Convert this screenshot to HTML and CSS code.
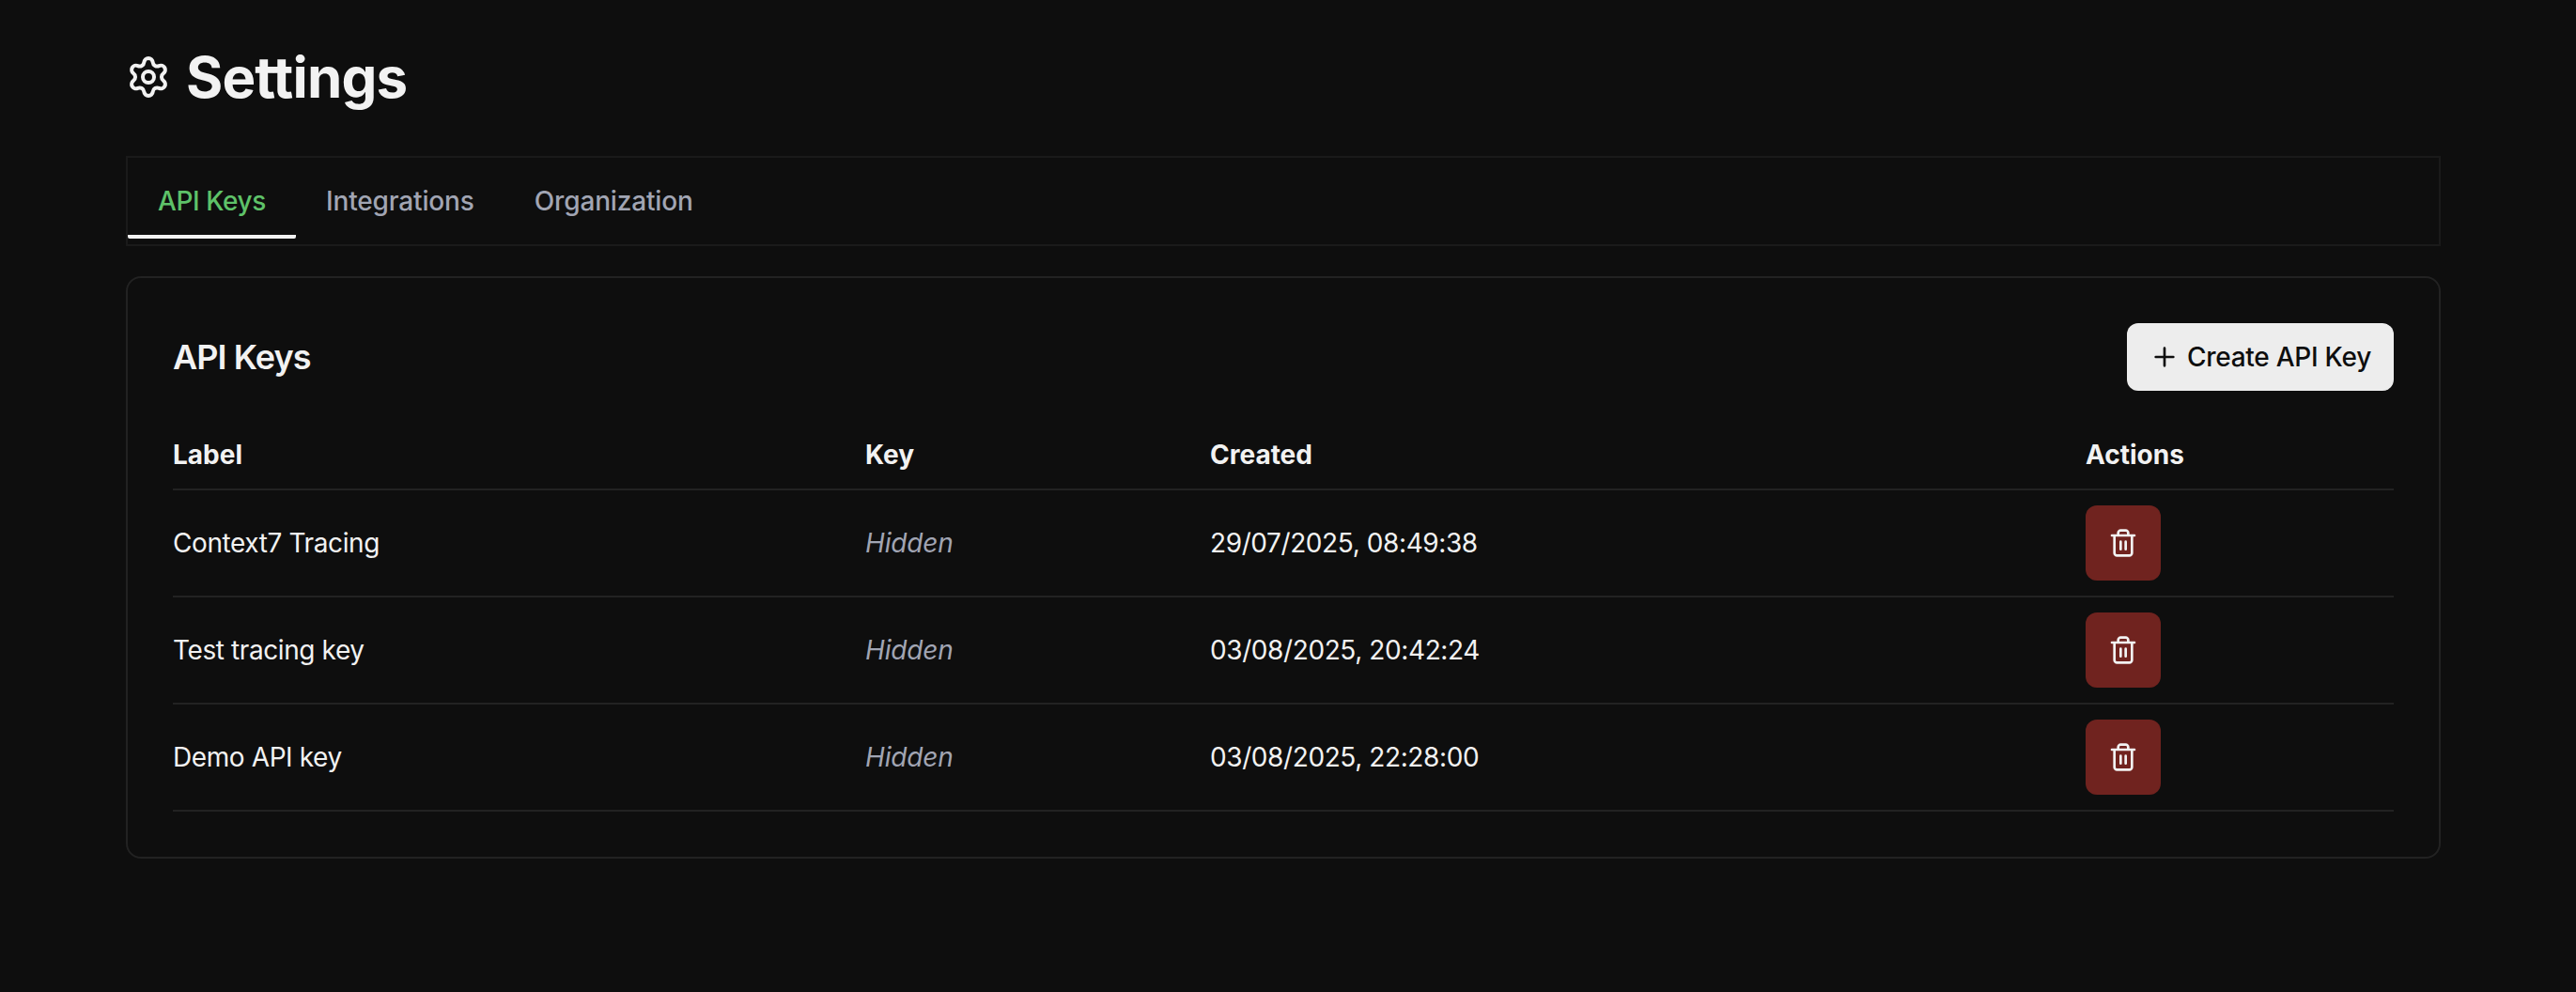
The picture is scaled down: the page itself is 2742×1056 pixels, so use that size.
FILE: index.html
```html
<!doctype html>
<html lang="en">

<head>
  <meta charset="utf-8">
  <title>Settings</title>
  <link rel="stylesheet" href="styles.css">
</head>

<body>
  <div class="page">
    <header class="page-header">
      <svg class="icon icon-lg" viewBox="0 0 24 24">
        <path d="M9.671 4.136a2.34 2.34 0 0 1 4.659 0 2.34 2.34 0 0 0 3.319 1.915 2.34 2.34 0 0 1 2.33 4.033 2.34 2.34 0 0 0 0 3.831 2.34 2.34 0 0 1-2.33 4.033 2.34 2.34 0 0 0-3.319 1.915 2.34 2.34 0 0 1-4.659 0 2.34 2.34 0 0 0-3.32-1.915 2.34 2.34 0 0 1-2.33-4.033 2.34 2.34 0 0 0 0-3.831A2.34 2.34 0 0 1 6.35 6.051a2.34 2.34 0 0 0 3.319-1.915" />
        <circle cx="12" cy="12" r="3" />
      </svg>
      <h1>Settings</h1>
    </header>

    <nav class="tabs">
      <a class="tab active">API Keys</a>
      <a class="tab">Integrations</a>
      <a class="tab">Organization</a>
    </nav>

    <section class="card">
      <div class="card-header">
        <h2>API Keys</h2>
        <button class="btn">
          <svg class="icon" viewBox="0 0 24 24"><path d="M5 12h14M12 5v14" /></svg>
          Create API Key
        </button>
      </div>

      <table class="keys">
        <thead>
          <tr>
            <th class="col-label">Label</th>
            <th class="col-key">Key</th>
            <th class="col-created">Created</th>
            <th>Actions</th>
          </tr>
        </thead>
        <tbody>
          <tr>
            <td>Context7 Tracing</td>
            <td class="hidden-key">Hidden</td>
            <td>29/07/2025, 08:49:38</td>
            <td>
              <button class="btn-delete">
                <svg class="icon" viewBox="0 0 24 24"><path d="M3 6h18M19 6v14c0 1-1 2-2 2H7c-1 0-2-1-2-2V6M8 6V4c0-1 1-2 2-2h4c1 0 2 1 2 2v2M10 11v6M14 11v6" /></svg>
              </button>
            </td>
          </tr>
          <tr>
            <td>Test tracing key</td>
            <td class="hidden-key">Hidden</td>
            <td>03/08/2025, 20:42:24</td>
            <td>
              <button class="btn-delete">
                <svg class="icon" viewBox="0 0 24 24"><path d="M3 6h18M19 6v14c0 1-1 2-2 2H7c-1 0-2-1-2-2V6M8 6V4c0-1 1-2 2-2h4c1 0 2 1 2 2v2M10 11v6M14 11v6" /></svg>
              </button>
            </td>
          </tr>
          <tr>
            <td>Demo API key</td>
            <td class="hidden-key">Hidden</td>
            <td>03/08/2025, 22:28:00</td>
            <td>
              <button class="btn-delete">
                <svg class="icon" viewBox="0 0 24 24"><path d="M3 6h18M19 6v14c0 1-1 2-2 2H7c-1 0-2-1-2-2V6M8 6V4c0-1 1-2 2-2h4c1 0 2 1 2 2v2M10 11v6M14 11v6" /></svg>
              </button>
            </td>
          </tr>
        </tbody>
      </table>
    </section>
  </div>
</body>

</html>
```
FILE: styles.css
```css
* {
  box-sizing: border-box;
}

body {
  margin: 0;
  background: #0e0e0e;
  color: #f2f2f2;
  font-family: Inter, sans-serif;
  font-size: 28px;
  line-height: 40px;
}

h1, h2 {
  margin: 0;
}

h1 {
  font-size: 60px;
  line-height: 72px;
  font-weight: 700;
  letter-spacing: -.85px;
}

h2 {
  font-size: 36px;
  font-weight: 600;
  letter-spacing: -.9px;
}

button {
  display: flex;
  align-items: center;
  justify-content: center;
  border: none;
  border-radius: 12px;
  font: inherit;
}

.page {
  width: 2464px;
  margin-left: 134px;
  padding-top: 46px;
}

.page-header {
  display: flex;
  align-items: center;
  gap: 16px;
  margin-bottom: 48px;
}

.icon {
  width: 32px;
  height: 32px;
  fill: none;
  stroke: currentColor;
  stroke-width: 2;
  stroke-linecap: round;
  stroke-linejoin: round;
}

.icon-lg {
  width: 48px;
  height: 48px;
}

.tabs {
  display: flex;
  align-items: center;
  height: 96px;
  margin-bottom: 32px;
  border: 2px solid #1a1a1a;
}

.tab {
  height: 80px;
  padding: 20px 32px 16px;
  border-bottom: 4px solid transparent;
  border-radius: 2px;
  color: #a1a5b3;
  font-weight: 500;
  letter-spacing: -.15px;
}

.tab.active {
  border-bottom-color: #f2f2f2;
  color: #5ec269;
  letter-spacing: -.4px;
}

.card {
  padding: 48px;
  border: 2px solid #222;
  border-radius: 16px;
}

.card-header {
  display: flex;
  align-items: center;
  justify-content: space-between;
  margin-bottom: 32px;
}

.btn {
  gap: 8px;
  height: 72px;
  padding: 0 24px;
  background: #ededed;
  color: #0e0e0e;
  font-weight: 500;
  letter-spacing: -.26px;
}

.keys {
  width: 100%;
  table-layout: fixed;
  border-collapse: separate;
  border-spacing: 0;
}

.keys th, .keys td {
  padding: 16px 0;
  border-bottom: 2px solid #222;
  text-align: left;
}

.keys th {
  font-weight: 700;
}

.keys td {
  letter-spacing: -.4px;
}

.col-label {
  width: 737px;
}

.col-key {
  width: 367px;
}

.col-created {
  width: 932px;
}

.keys .hidden-key {
  color: #a1a5b3;
  font-style: italic;
  letter-spacing: -.15px;
}

.btn-delete {
  width: 80px;
  height: 80px;
  padding: 0;
  background: #70231f;
  color: #f2f2f2;
}
```
